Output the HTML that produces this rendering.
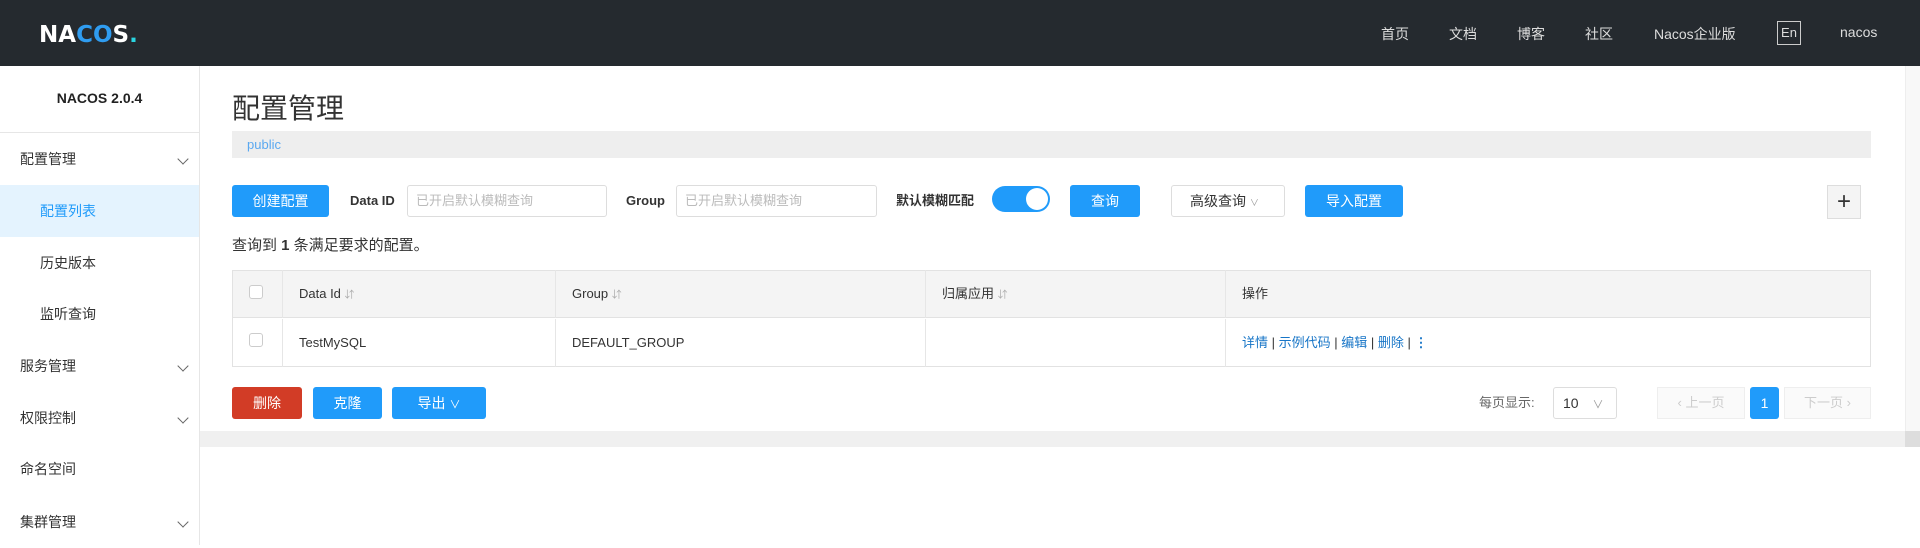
<!DOCTYPE html>
<html><head><meta charset="utf-8"><style>
*{box-sizing:border-box;margin:0;padding:0}
body{width:1920px;height:545px;overflow:hidden;background:#fff;font-family:"Liberation Sans","Noto Sans CJK SC",sans-serif;font-size:14px;color:#333;position:relative}
.abs{position:absolute}
.hdr{left:0;top:0;width:1920px;height:66px;background:#252a2f}
.nav{top:24px;color:#ddd;font-size:14px}
.side{left:0;top:66px;width:200px;height:479px;border-right:1px solid #e6e6e6}
.mi{left:0;width:199px;height:52px;line-height:52px;font-size:14px;color:#333}
.chev{position:absolute;right:12px;top:22px;width:8px;height:8px;border-right:1px solid #666;border-bottom:1px solid #666;transform:rotate(45deg)}
.btn{height:32px;line-height:32px;text-align:center;color:#fff;background:#209bfa;border-radius:3px;font-size:14px}
.inp{height:32px;border:1px solid #ddd;border-radius:3px;color:#bbb;font-size:13px;line-height:30px;padding-left:8px}
.lbl{font-size:13px;font-weight:bold;color:#333;line-height:32px}
.tc{border-left:1px solid #e6e6e6;height:48px;line-height:48px;padding-left:16px;font-size:13px}
.cb{width:14px;height:14px;border:1px solid #ccc;border-radius:3px}
a{color:#1775c7;text-decoration:none}
</style></head><body>
<div class="abs hdr"></div>
<div class="abs" style="left:39px;top:22px;font-size:23px;font-weight:bold;color:#fff;letter-spacing:0px;font-family:'DejaVu Sans',sans-serif">NA<span style="color:#2f9cf0">CO</span>S<span style="color:#2ad4e0">.</span></div>
<div class="abs nav" style="left:1381px">首页</div>
<div class="abs nav" style="left:1449px">文档</div>
<div class="abs nav" style="left:1517px">博客</div>
<div class="abs nav" style="left:1585px">社区</div>
<div class="abs nav" style="left:1654px">Nacos企业版</div>
<div class="abs" style="left:1777px;top:21px;width:24px;height:24px;border:1px solid #ccc;color:#ddd;font-size:13px;text-align:center;line-height:22px">En</div>
<div class="abs nav" style="left:1840px">nacos</div>

<div class="abs side"></div>
<div class="abs" style="left:0;top:90px;width:199px;text-align:center;font-weight:bold;font-size:14px;color:#222">NACOS 2.0.4</div>
<div class="abs" style="left:0;top:132px;width:199px;height:1px;background:#e6e6e6"></div>
<div class="abs mi" style="top:133px;padding-left:20px">配置管理<i class="chev"></i></div>
<div class="abs mi" style="top:185px;padding-left:40px;background:#e4f3fe;color:#209bfa">配置列表</div>
<div class="abs mi" style="top:237px;padding-left:40px">历史版本</div>
<div class="abs mi" style="top:288px;padding-left:40px">监听查询</div>
<div class="abs mi" style="top:340px;padding-left:20px">服务管理<i class="chev"></i></div>
<div class="abs mi" style="top:392px;padding-left:20px">权限控制<i class="chev"></i></div>
<div class="abs mi" style="top:443px;padding-left:20px">命名空间</div>
<div class="abs mi" style="top:496px;padding-left:20px">集群管理<i class="chev"></i></div>

<div class="abs" style="left:232px;top:87px;font-size:28px;color:#333">配置管理</div>
<div class="abs" style="left:232px;top:131px;width:1639px;height:27px;background:#eee;color:#5aa8f0;font-size:13px;line-height:27px;padding-left:15px">public</div>

<div class="abs btn" style="left:232px;top:185px;width:97px">创建配置</div>
<div class="abs lbl" style="left:350px;top:185px">Data ID</div>
<div class="abs inp" style="left:407px;top:185px;width:200px">已开启默认模糊查询</div>
<div class="abs lbl" style="left:626px;top:185px">Group</div>
<div class="abs inp" style="left:676px;top:185px;width:201px">已开启默认模糊查询</div>
<div class="abs lbl" style="left:896px;top:185px">默认模糊匹配</div>
<div class="abs" style="left:992px;top:186px;width:58px;height:26px;border-radius:13px;background:#209bfa"><div style="position:absolute;right:2px;top:2px;width:22px;height:22px;border-radius:50%;background:#fff"></div></div>
<div class="abs btn" style="left:1070px;top:185px;width:70px">查询</div>
<div class="abs" style="left:1171px;top:185px;width:114px;height:32px;border:1px solid #ddd;border-radius:3px;line-height:30px;padding-left:18px;font-size:14px">高级查询 <span style="font-size:9px;color:#999">∨</span></div>
<div class="abs btn" style="left:1305px;top:185px;width:98px">导入配置</div>
<div class="abs" style="left:1827px;top:185px;width:34px;height:34px;border:1px solid #ddd;background:#f4f4f4;text-align:center;line-height:32px;font-size:24px;color:#333;font-weight:300">+</div>

<div class="abs" style="left:232px;top:234px;font-size:15px;color:#333">查询到 <b>1</b> 条满足要求的配置。</div>

<div class="abs" style="left:232px;top:270px;width:1639px;height:97px;border:1px solid #e2e2e2"></div>
<div class="abs" style="left:233px;top:271px;width:1637px;height:47px;background:#f4f4f4;border-bottom:1px solid #e2e2e2"></div>
<div class="abs cb" style="left:249px;top:285px;background:#fff"></div>
<div class="abs cb" style="left:249px;top:333px"></div>
<div class="abs tc" style="left:282px;top:270px;width:273px">Data Id <span style="color:#aaa;font-size:10px">⇵</span></div>
<div class="abs tc" style="left:555px;top:270px;width:370px">Group <span style="color:#aaa;font-size:10px">⇵</span></div>
<div class="abs tc" style="left:925px;top:270px;width:300px">归属应用 <span style="color:#aaa;font-size:10px">⇵</span></div>
<div class="abs tc" style="left:1225px;top:270px;width:300px">操作</div>
<div class="abs tc" style="left:282px;top:319px;width:273px">TestMySQL</div>
<div class="abs tc" style="left:555px;top:319px;width:370px">DEFAULT_GROUP</div>
<div class="abs tc" style="left:925px;top:319px;width:300px"></div>
<div class="abs tc" style="left:1225px;top:319px;width:400px"><a>详情</a> | <a>示例代码</a> | <a>编辑</a> | <a>删除</a> | <b style="color:#1775c7">⋮</b></div>

<div class="abs btn" style="left:232px;top:387px;width:70px;background:#d23c26">删除</div>
<div class="abs btn" style="left:313px;top:387px;width:69px">克隆</div>
<div class="abs btn" style="left:392px;top:387px;width:94px">导出 <span style="font-size:11px">∨</span></div>

<div class="abs" style="left:1479px;top:387px;line-height:32px;font-size:13px;color:#666">每页显示:</div>
<div class="abs" style="left:1553px;top:387px;width:64px;height:32px;border:1px solid #ddd;border-radius:3px;line-height:30px;padding-left:9px;font-size:14px">10 <span style="font-size:11px;color:#999;margin-left:10px">∨</span></div>
<div class="abs" style="left:1657px;top:387px;width:88px;height:32px;border:1px solid #eee;background:#fafafa;color:#ccc;line-height:30px;text-align:center;font-size:13px">‹ 上一页</div>
<div class="abs btn" style="left:1750px;top:387px;width:29px">1</div>
<div class="abs" style="left:1784px;top:387px;width:87px;height:32px;border:1px solid #eee;background:#fafafa;color:#ccc;line-height:30px;text-align:center;font-size:13px">下一页 ›</div>

<div class="abs" style="left:200px;top:431px;width:1705px;height:16px;background:#f0f0f0"></div>
<div class="abs" style="left:1905px;top:66px;width:15px;height:381px;background:#f8f8f8;border-left:1px solid #eee"></div>
<div class="abs" style="left:1905px;top:431px;width:15px;height:16px;background:#ddd"></div>
</body></html>
